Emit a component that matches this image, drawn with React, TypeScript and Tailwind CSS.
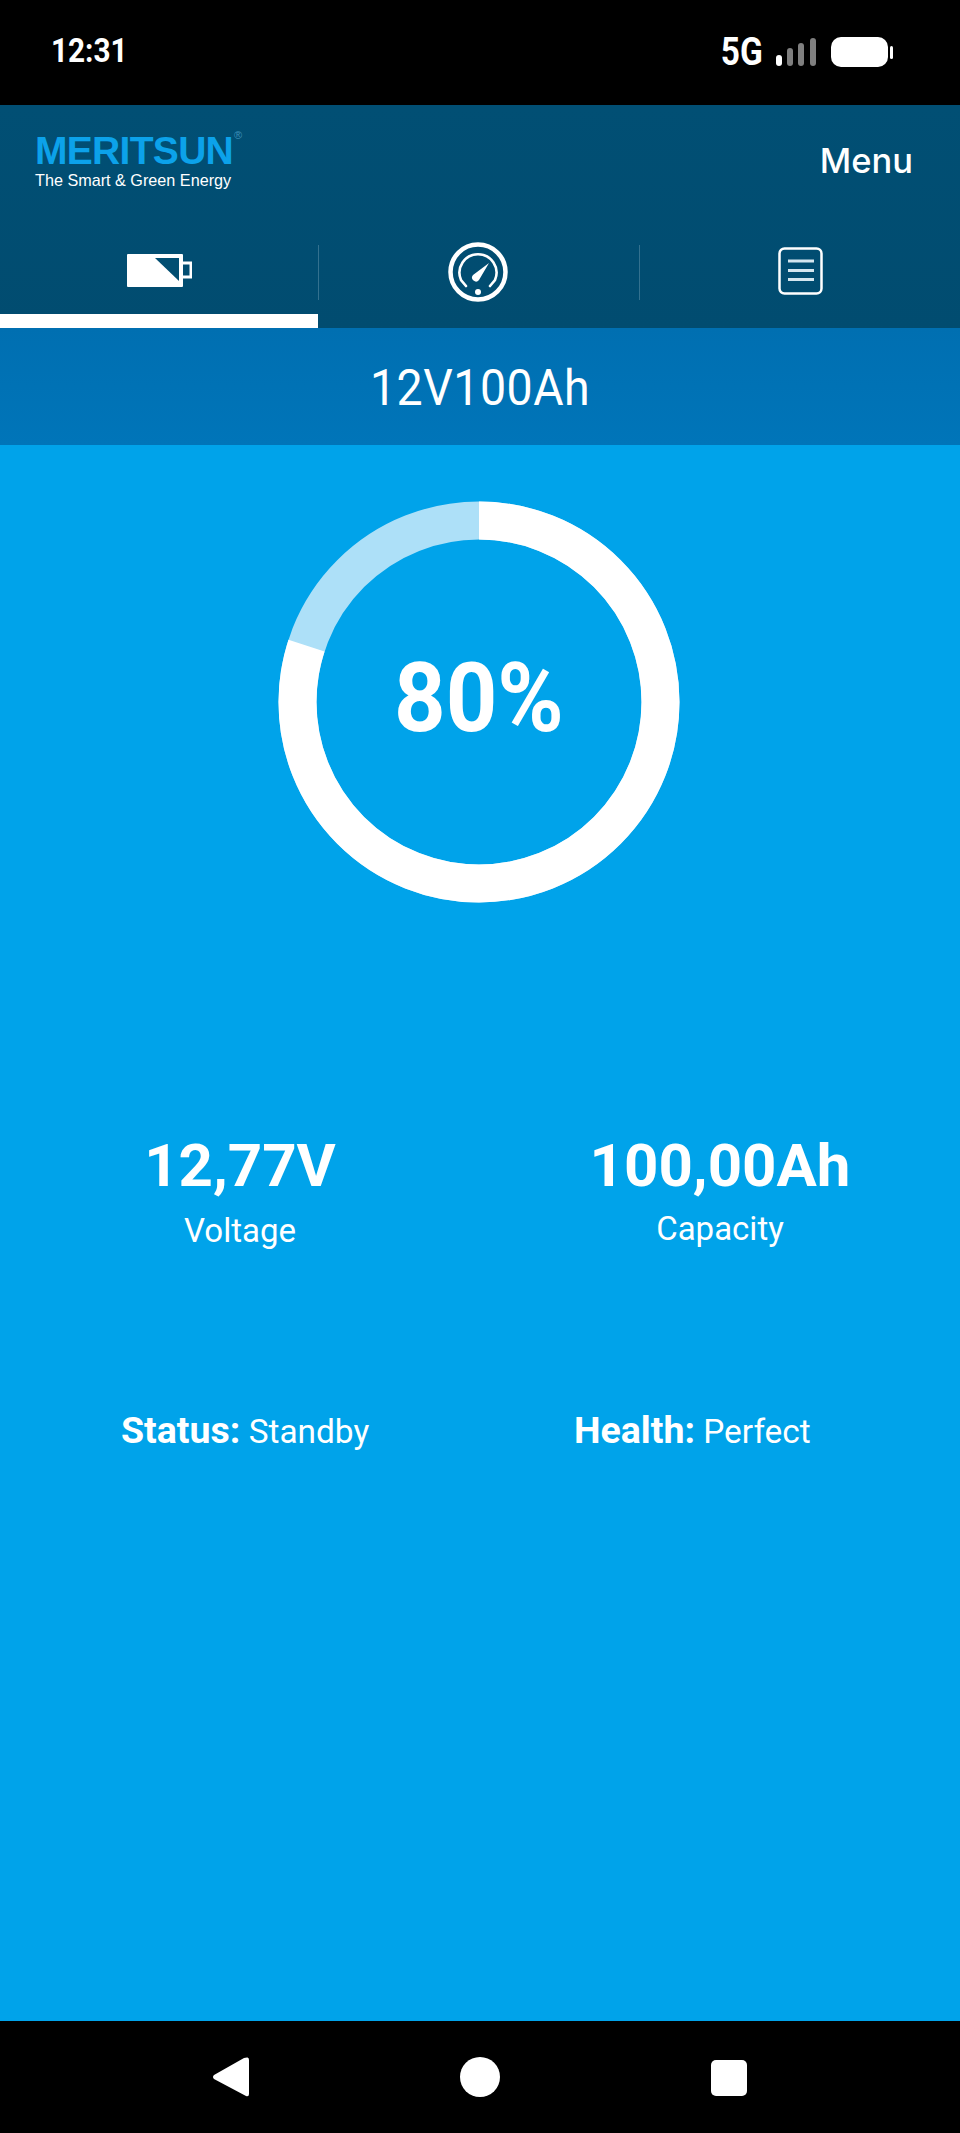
// Battery monitor home screen (Meritsun 12V100Ah).

const ROBOTO = "font-['Roboto',sans-serif]";

function StatusBar() {
  return (
    <div className="flex h-[105px] shrink-0 items-start justify-between bg-black pl-[51px] pr-[67px] pt-[37px] text-white">
      <span className={`${ROBOTO} origin-left scale-x-[0.9] text-[33px] leading-[28px] font-bold`}>12:31</span>
      <div className="flex items-start">
        <span className={`${ROBOTO} mr-[13px] origin-right scale-x-[0.88] text-[38px] leading-[30px] font-bold`}>5G</span>
        <svg width="42" height="30" viewBox="0 0 42 30" className="mr-[13px]" fill="#fff">
          <rect x="0" y="18" width="6" height="11" rx="3" />
          <rect x="11" y="11" width="6" height="18" rx="3" fill="#7f7f7f" />
          <rect x="22" y="6" width="6" height="23" rx="3" fill="#7f7f7f" />
          <rect x="34" y="1" width="6" height="28" rx="3" fill="#7f7f7f" />
        </svg>
        <svg width="62" height="30" viewBox="0 0 62 30" fill="#fff">
          <rect x="0" y="0" width="57" height="30" rx="10" />
          <rect x="59" y="9" width="3" height="13" rx="1.5" />
        </svg>
      </div>
    </div>
  );
}

function BatteryTab() {
  return (
    <svg width="65" height="33" viewBox="0 0 65 33">
      <rect x="0" y="0" width="56" height="33" rx="1" fill="#fff" />
      <path d="M28 4H52V27Z" fill="#014e72" />
      <path d="M56 9H64V23H56" fill="none" stroke="#fff" strokeWidth="3" />
    </svg>
  );
}

function GaugeTab() {
  return (
    <svg width="60" height="60" viewBox="-30 -30 60 60" fill="none" stroke="#fff">
      <circle r="27.5" strokeWidth="4.5" />
      <path d="M-12 14L-17 8A18.5 18.5 0 1 1 17 8L12 14" strokeWidth="2.6" strokeLinecap="round" />
      <path d="M11 -9L1 8A3.6 3.6 0 0 1 -5 3Z" fill="#fff" stroke="none" />
      <circle cy="20" r="3" fill="#fff" stroke="none" />
    </svg>
  );
}

function ListTab() {
  return (
    <svg width="45" height="48" viewBox="0 0 45 48" fill="none" stroke="#fff">
      <rect x="1.5" y="1.5" width="42" height="45" rx="5" strokeWidth="2.5" />
      <path d="M10 14H36M10 23.5H36M10 32.5H36" strokeWidth="3" stroke="#d4e6ef" />
    </svg>
  );
}

function Header() {
  return (
    <div className="h-[223px] shrink-0 bg-gradient-to-b from-[#014f74] to-[#014c70]">
      <div className="flex h-[126px] items-start justify-between pl-[35px] pr-[47px]">
        <div className="relative pt-[27px]">
          <div className="font-['Liberation_Sans',sans-serif] text-[39px] leading-[38px] font-bold tracking-[-0.7px] text-[#0ca2ea]">MERITSUN</div>
          <span className="absolute left-[199px] top-[25px] font-['Liberation_Sans',sans-serif] text-[11px] leading-none text-[#3f8fb8]">®</span>
          <div className="mt-[1px] font-['Liberation_Sans',sans-serif] text-[16.2px] leading-[18px] text-white">The Smart &amp; Green Energy</div>
        </div>
        <span className="mt-[34px] font-['Inter',sans-serif] text-[34.5px] leading-[44px] font-medium text-white">Menu</span>
      </div>
      <div className="grid h-[97px] grid-cols-[318px_322px_320px]">
        <div className="flex flex-col">
          <div className="flex flex-1 items-start justify-center pt-[23px]">
            <BatteryTab />
          </div>
          <div className="h-[14px] bg-white" />
        </div>
        <div className="relative flex justify-center pt-[11px] pr-[2px]">
          <GaugeTab />
          <span className="absolute left-0 top-[14px] h-[55px] w-px bg-[#33718f]" />
          <span className="absolute right-0 top-[14px] h-[55px] w-px bg-[#33718f]" />
        </div>
        <div className="flex justify-center pt-[16px]">
          <ListTab />
        </div>
      </div>
    </div>
  );
}

function Ring({ percent }: { percent: number }) {
  const r = 181.5;
  const c = 2 * Math.PI * r;
  return (
    <div className="relative h-[402px] w-[402px]">
      <svg width="402" height="402" viewBox="0 0 402 402" className="-rotate-90">
        <circle cx="201" cy="201" r={r} fill="none" stroke="#ade0f8" strokeWidth="38" />
        <circle
          cx="201"
          cy="201"
          r={r}
          fill="none"
          stroke="#fff"
          strokeWidth="38"
          strokeDasharray={`${(c * percent) / 100} ${c}`}
        />
      </svg>
      <div className={`${ROBOTO} absolute inset-0 flex items-center justify-center pb-[8px] text-[90px] font-bold text-white`}>
        <span className="scale-y-[1.08]">{percent}%</span>
      </div>
    </div>
  );
}

function Reading({ value, label, labelClass }: { value: string; label: string; labelClass: string }) {
  return (
    <div className="flex flex-col items-center">
      <span className="text-[60px] leading-[70px] font-bold">{value}</span>
      <span className={`${labelClass} text-[33px] leading-[40px]`}>{label}</span>
    </div>
  );
}

function NavBar() {
  return (
    <div className="relative h-[112px] shrink-0 bg-black">
      <svg width="40" height="42" viewBox="0 0 40 42" fill="#fff" className="absolute left-[211px] top-[35px]">
        <path d="M36 1.5Q38 1 38 4V38Q38 41 35 40L3 23Q1 21 3 19L33 2Z" />
      </svg>
      <span className="absolute left-[460px] top-[36px] h-[40px] w-[40px] rounded-full bg-white" />
      <span className="absolute left-[711px] top-[39px] h-[36px] w-[36px] rounded-[5px] bg-white" />
    </div>
  );
}

export default function App() {
  return (
    <div className={`${ROBOTO} flex h-[2133px] w-[960px] flex-col overflow-hidden`}>
      <StatusBar />
      <Header />
      <div className="flex h-[117px] shrink-0 items-center justify-center bg-gradient-to-b from-[#006fb1] to-[#0075b9] text-[46.5px] tracking-[0.5px] text-white">
        <span className="mt-[5px] scale-y-[1.06]">12V100Ah</span>
      </div>
      <main className="flex flex-1 flex-col bg-[#00a3ea] text-white">
        <div className="flex justify-center pt-[56px] pr-[2px]">
          <Ring percent={80} />
        </div>
        <div className="mt-[228px] grid grid-cols-2">
          <Reading value="12,77V" label="Voltage" labelClass="mt-[10px]" />
          <Reading value="100,00Ah" label="Capacity" labelClass="mt-[8px]" />
        </div>
        <div className="mt-[157px] grid grid-cols-2 text-[33.4px] leading-[44px]">
          <div className="pl-[121px]">
            <span className="text-[37.5px] font-bold">Status:</span> Standby
          </div>
          <div className="pl-[94px]">
            <span className="text-[37.5px] font-bold">Health:</span> Perfect
          </div>
        </div>
      </main>
      <NavBar />
    </div>
  );
}
